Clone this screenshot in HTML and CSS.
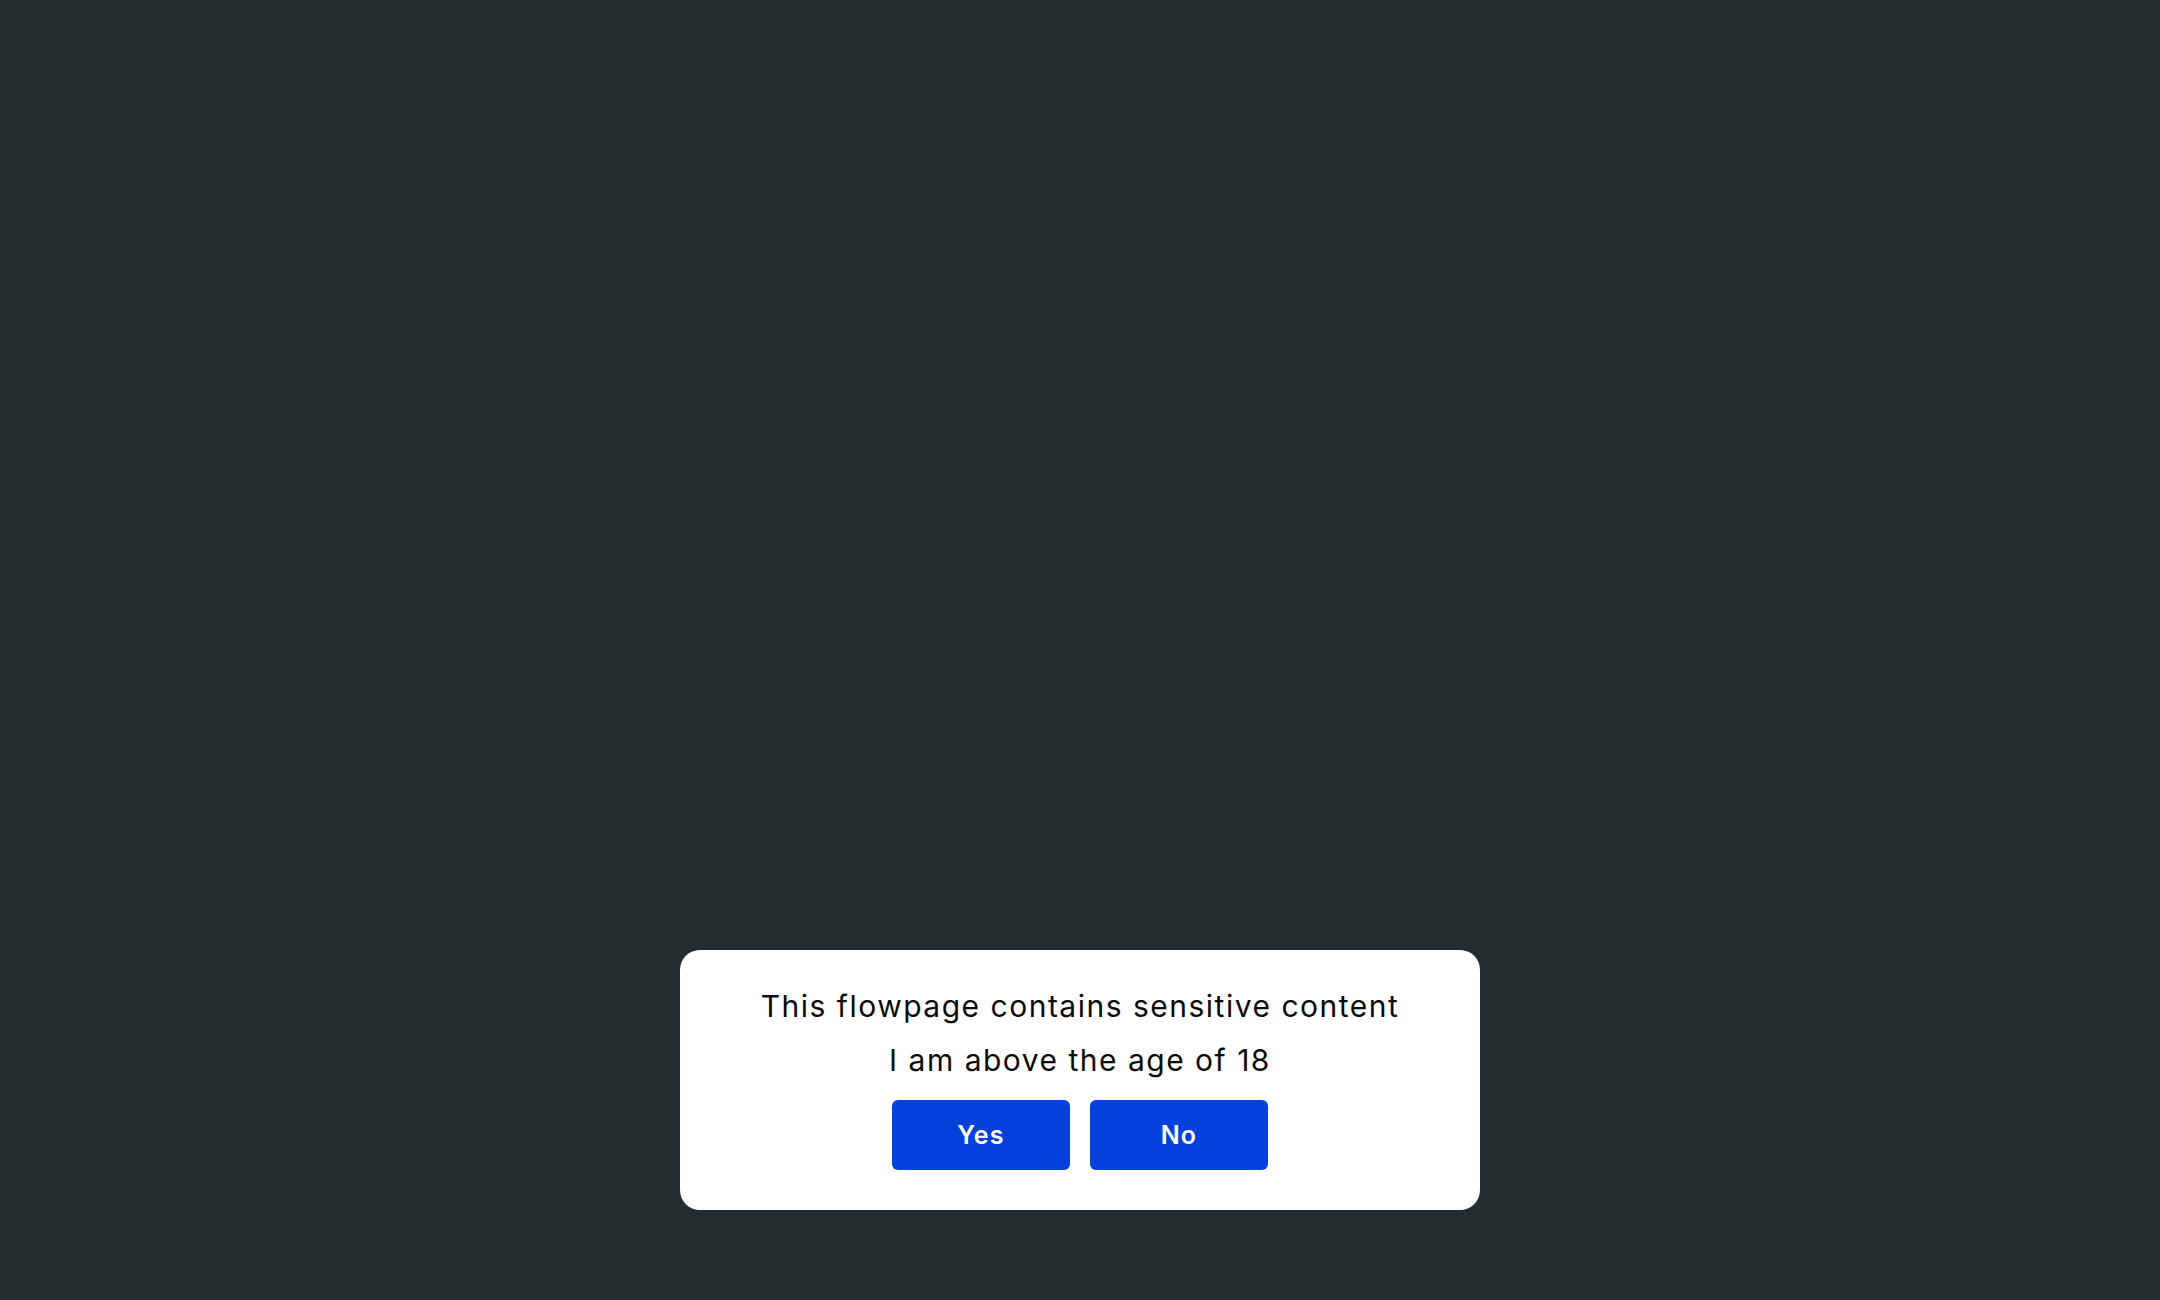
FILE: index.html
```html
<!DOCTYPE html>
<html lang="en">
<head>
<meta charset="utf-8">
<title>Flowpage</title>
<link rel="stylesheet" href="styles.css">
</head>
<body>
<main class="page">
  <div class="dialog">
    <p class="line">This flowpage contains sensitive content</p>
    <p class="line">I am above the age of 18</p>
    <div class="actions">
      <button class="btn" type="button">Yes</button>
      <button class="btn" type="button">No</button>
    </div>
  </div>
</main>
</body>
</html>
```

FILE: styles.css
```css
html, body {
  margin: 0;
  padding: 0;
  background: #262d30;
}
.page {
  height: 1300px;
  display: flex;
  flex-direction: column;
  justify-content: flex-end;
  align-items: center;
  padding-bottom: 90px;
  box-sizing: border-box;
  font-family: Inter, "Noto Sans", sans-serif;
}
.dialog {
  width: 800px;
  height: 260px;
  box-sizing: border-box;
  background: #ffffff;
  border-radius: 20px;
  padding: 29px 40px 0;
  display: flex;
  flex-direction: column;
  align-items: center;
}
.line {
  margin: 0;
  font-size: 30px;
  line-height: 54px;
  letter-spacing: 1.5px;
  color: #0a0a0a;
  text-align: center;
}
.actions {
  margin-top: 13px;
  display: flex;
  gap: 20px;
}
.btn {
  width: 178px;
  height: 70px;
  border: none;
  border-radius: 6px;
  background: #0340dc;
  color: #ffffff;
  font-family: Inter, "Noto Sans", sans-serif;
  font-size: 25px;
  font-weight: 600;
  letter-spacing: 1.2px;
  padding: 0;
}
```
